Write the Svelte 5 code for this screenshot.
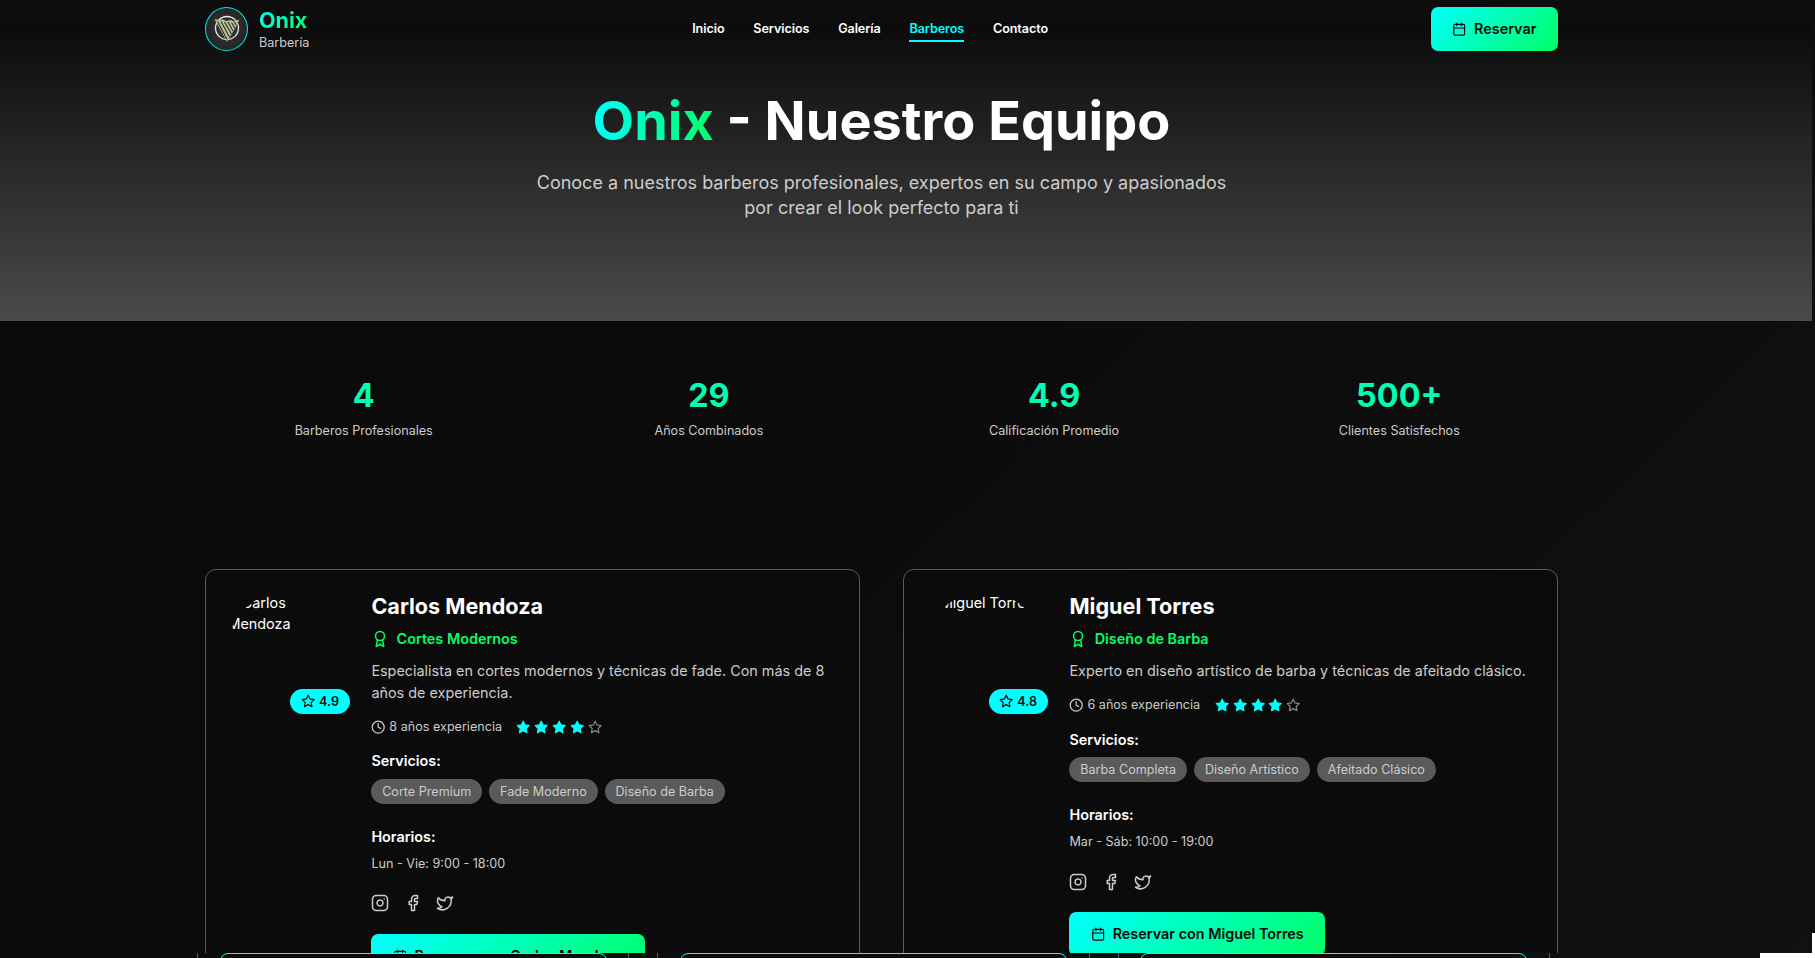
<script>
  const links = ['Inicio', 'Servicios', 'Galería', 'Barberos', 'Contacto'];
  const stats = [
    ['4', 'Barberos Profesionales'],
    ['29', 'Años Combinados'],
    ['4.9', 'Calificación Promedio'],
    ['500+', 'Clientes Satisfechos']
  ];
  const barbers = [
    {
      name: 'Carlos Mendoza', specialty: 'Cortes Modernos', rating: '4.9', years: 8,
      bio: 'Especialista en cortes modernos y técnicas de fade. Con más de 8 años de experiencia.',
      services: ['Corte Premium', 'Fade Moderno', 'Diseño de Barba'], hours: 'Lun - Vie: 9:00 - 18:00'
    },
    {
      name: 'Miguel Torres', specialty: 'Diseño de Barba', rating: '4.8', years: 6,
      bio: 'Experto en diseño artístico de barba y técnicas de afeitado clásico.',
      services: ['Barba Completa', 'Diseño Artístico', 'Afeitado Clásico'], hours: 'Mar - Sáb: 10:00 - 19:00'
    }
  ];
  const icons = {
    calendar: '<path d="M8 2v4M16 2v4M3 10h18"/><rect x="3" y="4" width="18" height="18" rx="2"/>',
    award: '<circle cx="12" cy="8" r="6"/><path d="M15.477 12.89 17 22l-5-3-5 3 1.523-9.11"/>',
    clock: '<circle cx="12" cy="12" r="10"/><path d="M12 6v6l4 2"/>',
    star: '<path d="m12 2 3.09 6.26L22 9.27l-5 4.87 1.18 6.88L12 17.77l-6.18 3.25L7 14.14 2 9.27l6.91-1.01z"/>',
    instagram: '<rect x="2" y="2" width="20" height="20" rx="5"/><path d="M16 11.37A4 4 0 1 1 12.63 8 4 4 0 0 1 16 11.37zM17.5 6.5h.01"/>',
    facebook: '<path d="M18 2h-3a5 5 0 0 0-5 5v3H7v4h3v8h4v-8h3l1-4h-4V7a1 1 0 0 1 1-1h3z"/>',
    twitter: '<path d="M22 4s-.7 2.1-2 3.4c1.6 10-9.4 17.3-18 11.6 2.2.1 4.4-.6 6-2C3 15.5.5 9.6 3 5c2.2 2.6 5.6 4.1 9 4-.9-4.2 4-6.6 7-3.8 1.1 0 3-1.2 3-1.2z"/>'
  };
</script>

{#snippet icon(name, size, filled = false)}
  <svg width={size} height={size} viewBox="0 0 24 24" fill={filled ? 'currentColor' : 'none'} stroke="currentColor" stroke-width="2" stroke-linecap="round" stroke-linejoin="round">{@html icons[name]}</svg>
{/snippet}

<div class="page">
  <div class="view">
    <div class="backdrop">
      <header>
        <div class="brand">
          <div class="logo">
            <svg width="26" height="28" viewBox="0 0 26 28" fill="none">
              <circle cx="13" cy="13" r="11.5" stroke="#e8e8e8" stroke-width="1.3" />
              <path d="M.5 4.500H9l3 1.500 5-1 3 1.500 5.500-2L23 9l-1 3-9 14.700z" fill="#b9c193" />
              <path d="M3.500 6.500l9.500 18M7 6.500l8.500 15.500M10.500 7l7 12M14 7l5 9M17.500 7.500l3.500 6M20.500 7l1.500 3" stroke="#2c2d25" stroke-width="1.1" />
            </svg>
          </div>
          <div class="brand-text"><b>Onix</b><span>Barbería</span></div>
        </div>
        <nav>
          {#each links as link}<a href="#top" class:active={link === 'Barberos'}>{link}</a>{/each}
        </nav>
        <button class="cta">{@render icon('calendar', 14.4)}Reservar</button>
      </header>

      <section class="hero">
        <h1><span>Onix</span> - Nuestro Equipo</h1>
        <p>Conoce a nuestros barberos profesionales, expertos en su campo y apasionados por crear el look perfecto para ti</p>
      </section>
    </div>

    <section class="stats">
      {#each stats as [value, label]}
        <div><strong>{value}</strong><span>{label}</span></div>
      {/each}
    </section>

    <section class="team">
      {#each barbers as b}
        <article>
          <div class="portrait">
            <div class="avatar"><i></i>{b.name}</div>
            <div class="rating">{@render icon('star', 14.4)}{b.rating}</div>
          </div>
          <div class="info">
            <h2>{b.name}</h2>
            <div class="specialty">{@render icon('award', 18)}{b.specialty}</div>
            <p class="bio">{b.bio}</p>
            <div class="experience">
              <span class="years">{@render icon('clock', 14.4)}{b.years} años experiencia</span>
              <span class="stars">
                {#each [1, 2, 3, 4, 5] as n}<span class:off={n > 4}>{@render icon('star', 14.4, n <= 4)}</span>{/each}
              </span>
            </div>
            <h3>Servicios:</h3>
            <div class="tags">{#each b.services as s}<span>{s}</span>{/each}</div>
            <h3>Horarios:</h3>
            <p class="hours">{b.hours}</p>
            <div class="social">
              {@render icon('instagram', 18)}{@render icon('facebook', 18)}{@render icon('twitter', 18)}
            </div>
            <button class="cta">{@render icon('calendar', 14.4)}Reservar con {b.name}</button>
          </div>
        </article>
      {/each}
    </section>
  </div>
  <footer>
    <div class="plans">
      {#each [1, 2, 3] as _}<div class="plan"><div></div></div>{/each}
    </div>
    <div class="blank"></div>
  </footer>
  <div class="edge"></div>
</div>

<style>
  :global(body) { margin: 0; background: #0c0c0c; overflow: hidden; }
  * { box-sizing: border-box; }
  .page { position: relative; width: 1815px; height: 958px; overflow: hidden; font: 14.4px/21.6px Inter, sans-serif; color: #fff; background: linear-gradient(135deg, #0a0a0a, #0b0b0b 45%, #111); }
  svg { display: block; flex: none; }
  h1, h2, h3, p { margin: 0; }
  .view { height: 953px; overflow: hidden; }
  .backdrop { width: 1812px; height: 321px; background: linear-gradient(#0a0a0a, #4a4a4a) 0 22px / 100% 299px no-repeat, #0d0d0d; }
  header { width: 1353px; height: 58px; margin-left: 205px; display: flex; justify-content: space-between; align-items: center; }
  .brand { display: flex; align-items: center; gap: 11px; }
  .logo { width: 43px; height: 44px; border: 1px solid #00e5e5; border-radius: 50%; background: radial-gradient(#373737, #1d1d1d); display: grid; place-items: center; }
  .brand-text { display: flex; flex-direction: column; align-items: flex-start; padding-top: 2px; }
  .brand-text b { font-size: 21.6px; line-height: 24px; font-weight: 700; letter-spacing: -.1px; }
  .brand-text b, h1 span { background: linear-gradient(135deg, #00ffff, #00ff66); background-clip: text; color: transparent; }
  .brand-text span { font-size: 12.6px; line-height: 20px; padding-top: 1px; margin-bottom: -1px; color: #ccc; }
  nav { display: flex; gap: 28.8px; }
  nav a { position: relative; color: #fff; text-decoration: none; font-weight: 600; font-size: 12.6px; line-height: 20px; letter-spacing: -.08px; }
  nav a.active { color: #00ffff; }
  nav a.active::after { content: ''; position: absolute; left: 0; right: 0; top: 21px; height: 2px; background: #00ffff; }
  .cta { display: inline-flex; align-items: center; gap: 7.2px; border: 0; border-radius: 7.2px; height: 44px; padding: 0 21.6px; background: linear-gradient(135deg, #00ffff, #00ff66); color: #0a0a0a; font: 600 14.4px/21.6px Inter, sans-serif; white-space: nowrap; }
  .hero { width: 720px; margin-left: 521.5px; padding-top: 30px; text-align: center; }
  h1 { font-size: 54px; line-height: 65px; font-weight: 700; white-space: nowrap; }
  h1 span { background-image: linear-gradient(100deg, #00ffff, #00ff66); }
  .hero p { margin-top: 17px; font-size: 18px; line-height: 25.2px; color: #ccc; }
  .stats { width: 1352px; margin-left: 205.5px; height: 248px; padding-top: 52px; display: grid; grid-template-columns: repeat(4, 1fr); column-gap: 28.8px; text-align: center; }
  .stats div { display: flex; flex-direction: column; }
  .stats strong { font-size: 32.4px; line-height: 45px; font-weight: 700; color: #00ffb3; }
  .stats span { margin-top: 2px; font-size: 12.6px; line-height: 22px; color: #ccc; }
  .team { width: 1353px; margin-left: 205px; display: grid; grid-template-columns: 1fr 1fr; gap: 43.2px; }
  article { height: 460px; padding: 21.6px 21.4px; border: 1px solid #5a5a5a; border-radius: 11px; background: #0b0b0b; display: flex; gap: 21.6px; }
  .portrait { position: relative; flex: none; width: 122.4px; height: 122.4px; }
  .avatar { width: 118px; height: 118.8px; border-radius: 50%; overflow: hidden; }
  .avatar i { display: inline-block; width: 14.4px; }
  .rating { position: absolute; right: 0; bottom: 0; height: 25px; display: flex; align-items: center; gap: 3.6px; padding: 0 10.8px; border-radius: 13px; background: #00ffff; color: #0a0a0a; font-size: 12.6px; font-weight: 600; }
  .info { flex: 1; min-width: 0; }
  h2 { font-size: 21.6px; line-height: 28px; font-weight: 700; }
  .specialty { display: flex; align-items: center; gap: 7.2px; height: 22px; margin-top: 8px; color: #00ff66; font-weight: 600; }
  .bio { margin-top: 10.6px; line-height: 21.6px; color: #ccc; }
  .experience { display: flex; align-items: center; gap: 14.4px; height: 22px; margin-top: 12.4px; color: #ccc; font-size: 12.6px; }
  .years { display: flex; align-items: center; gap: 3.6px; }
  .stars { display: flex; gap: 3.6px; color: #00ffff; }
  .off { color: #888; }
  h3 { font-size: 14.4px; line-height: 22px; font-weight: 600; margin-top: 12.4px; }
  .tags { display: flex; gap: 7.2px; margin-top: 6.6px; margin-bottom: 22.2px; }
  .tags span { height: 25px; line-height: 25px; padding: 0 10.8px; border-radius: 13px; background: #5a5a5a; color: #ccc; font-size: 12.6px; white-space: nowrap; }
  .hours { margin-top: 5.6px; font-size: 12.6px; line-height: 20px; color: #ccc; }
  .social { display: flex; gap: 14.4px; margin: 20.8px 0 21.4px; color: #ccc; }
  footer { height: 5px; display: flex; justify-content: space-between; }
  .plans { width: 1353px; margin-left: 197px; display: grid; grid-template-columns: repeat(3, 1fr); gap: 28px; overflow: hidden; }
  .plan { height: 30px; padding: 0 21.6px; border: solid #5a5a5a; border-width: 0 1px; }
  .plan div { height: 30px; border: 1px solid #00ffff; border-radius: 8px; }
  .blank { width: 55px; background: #fff; }
  .edge { position: absolute; right: 0; bottom: 0; width: 3px; height: 25px; background: #fff; }
</style>
